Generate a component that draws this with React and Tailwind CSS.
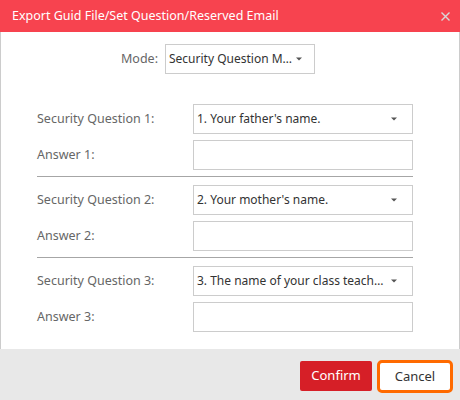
import React from "react";

const Caret = () => (
  <svg width="6" height="4" viewBox="0 0 6 4" className="shrink-0">
    <path d="M0 0.5 H6 L3 3.5 Z" fill="#555" />
  </svg>
);

const SelectBox = ({ text, className = "" }) => (
  <div
    className={`flex items-center h-[30px] border border-[#cccccc] bg-white pl-[3px] pr-[15px] ${className}`}
  >
    <span className="flex-1 min-w-0 truncate text-[#333333] text-[12px]">{text}</span>
    <span className="ml-[2px]">
      <Caret />
    </span>
  </div>
);

const Row = ({ label, children }) => (
  <div className="flex items-center">
    <div className="w-[156px] text-[#666666]">{label}</div>
    <div className="w-[220px]">{children}</div>
  </div>
);

const questions = [
  { n: 1, q: "1. Your father's name." },
  { n: 2, q: "2. Your mother's name." },
  { n: 3, q: "3. The name of your class teacher in primary school." },
];

export default function App() {
  return (
    <div
      className="w-[460px] h-[400px] flex flex-col bg-white text-[12.5px]"
      style={{ fontFamily: '"Noto Sans", "Open Sans", sans-serif' }}
    >
      <div className="h-[32px] shrink-0 bg-[#f7434f] flex items-center justify-between pl-[12px] pr-[10px]">
        <span className="text-white text-[12.5px]">
          Export Guid File/Set Question/Reserved Email
        </span>
        <svg width="9" height="9" viewBox="0 0 9 9">
          <path d="M0.5 0.5 L8.5 8.5 M8.5 0.5 L0.5 8.5" stroke="#d8d8d8" strokeWidth="1.4" />
        </svg>
      </div>

      <div className="flex-1 border-x border-[#cccccc] pt-[12px]">
        <div className="flex items-center pl-[120px]">
          <span className="text-[#666666] mr-[7px]">Mode:</span>
          <SelectBox text="Security Question Mode" className="w-[150px] !pr-[12px]" />
        </div>

        <div className="pl-[36px] pt-[30px] flex flex-col">
          {questions.map((item, i) => (
            <div key={item.n} className="flex flex-col">
              {i > 0 && <div className="w-[376px] h-px bg-[#a6a6a6] mt-[6px] mb-[8px]" />}
              <div className="flex flex-col gap-[6px]">
                <Row label={`Security Question ${item.n}:`}>
                  <SelectBox text={item.q} />
                </Row>
                <Row label={`Answer ${item.n}:`}>
                  <div className="h-[30px] border border-[#cccccc] bg-white" />
                </Row>
              </div>
            </div>
          ))}
        </div>
      </div>

      <div className="h-[51px] shrink-0 bg-[#e8e8e8] flex items-start justify-end pt-[11px] pr-[7px] gap-[5px]">
        <button className="mt-[1px] w-[72px] h-[30px] rounded-[2px] bg-[#d61f27] text-white text-[13px]">
          Confirm
        </button>
        <button className="w-[76px] h-[33px] rounded-[5px] border-[3px] border-[#ff6a00] bg-white text-[#333333] text-[13px]">
          Cancel
        </button>
      </div>
    </div>
  );
}
